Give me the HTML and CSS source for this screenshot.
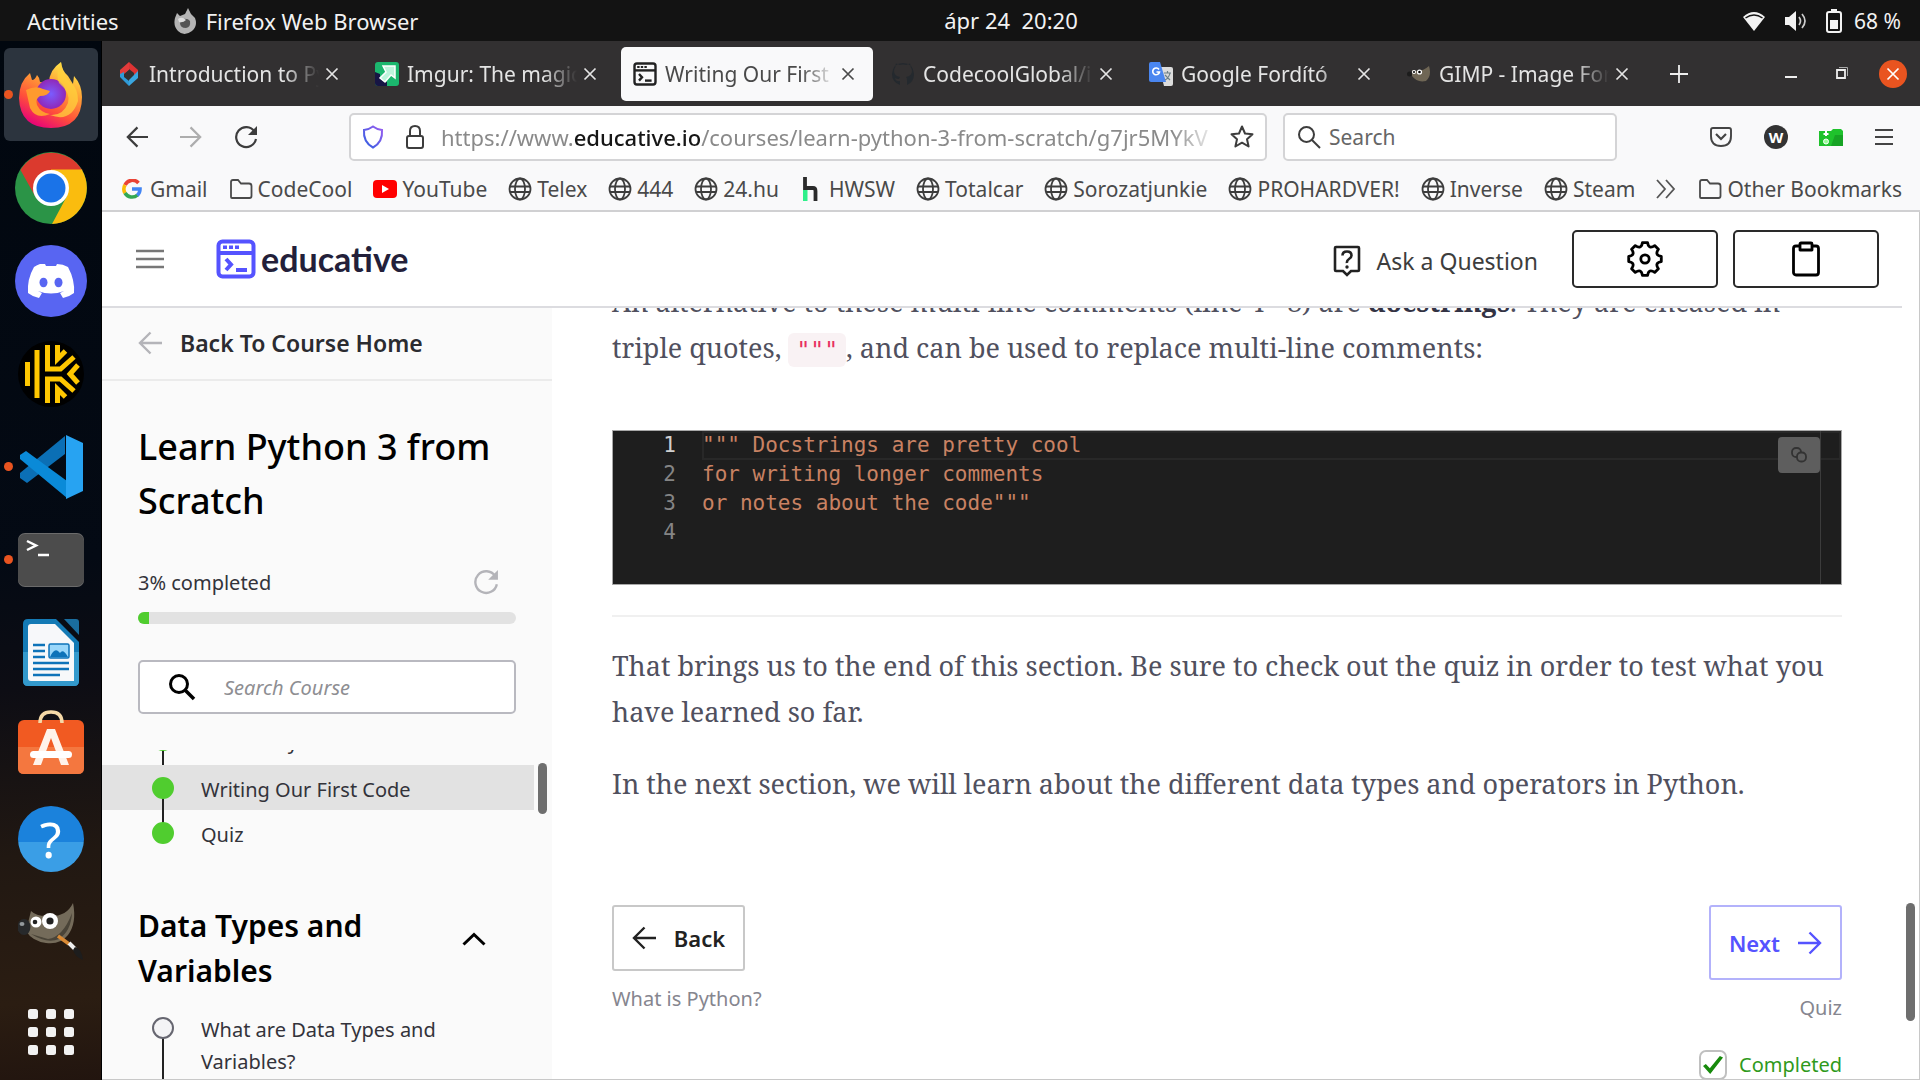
FILE: index.html
```html
<!DOCTYPE html>
<html lang="en">
<head>
<meta charset="utf-8">
<title>Writing Our First Code - Learn Python 3 from Scratch</title>
<link rel="stylesheet" href="styles.css">
</head>
<body>
<svg class="sprite" aria-hidden="true">
  <symbol id="globe" viewBox="0 0 24 24"><g fill="none" stroke="#3d3d3d" stroke-width="1.8"><circle cx="12" cy="12" r="10.5"/><ellipse cx="12" cy="12" rx="5" ry="10.5"/><path d="M2 9.5h20M2 15h20"/></g></symbol>
  <symbol id="folder" viewBox="0 0 24 24"><path d="M2 20V5q0-2 2-2h5l3 3.500h8q2.500 0 2.500 2.500V19q0 2-2 2H3q-1 0-1-1z" fill="none" stroke="#4a4a4a" stroke-width="1.800"/></symbol>
  <symbol id="close" viewBox="0 0 14 14"><path d="M1.500 1.500l11 11M12.500 1.500l-11 11" fill="none" stroke="currentColor" stroke-width="1.700"/></symbol>
  <symbol id="arrow-left" viewBox="0 0 24 24"><path d="M12.500 1.500L2 12l10.500 10.500M2 12h22" fill="none" stroke="currentColor" stroke-width="2.400"/></symbol>
  <symbol id="arrow-right" viewBox="0 0 24 24"><path d="M11.500 1.500L22 12 11.500 22.500M22 12H0" fill="none" stroke="currentColor" stroke-width="2.400"/></symbol>
  <symbol id="reload" viewBox="0 0 24 24"><path d="M20.500 6.500A10 10 0 1 0 22 14" fill="none" stroke="currentColor" stroke-width="2.200"/><path d="M23 1v9h-9z" fill="currentColor"/></symbol>
  <symbol id="search" viewBox="0 0 24 24"><circle cx="9.500" cy="9.500" r="7.500" fill="none" stroke="currentColor" stroke-width="2"/><path d="M15 15l8 8" stroke="currentColor" stroke-width="2"/></symbol>
  <symbol id="terminal-window" viewBox="0 0 40 40"><g fill="none" stroke="currentColor" stroke-width="4"><rect x="2.500" y="2.500" width="35" height="35" rx="4"/><path d="M2 14h36"/><path d="M10 20l5 5.500-5 5.500"/><path d="M20 31h11"/></g><path d="M7 6.500h4v3.500H7zM13 6.500h4v3.500h-4zM19 6.500h4v3.500h-4z" fill="currentColor"/></symbol>
</svg>

<div class="desktop">
  <header class="topbar">
    <div class="topbar-left">
      <button class="plain">Activities</button>
      <button class="plain app-name">
        <svg width="24" height="26" viewBox="0 0 24 26"><path d="M2 10L4 5l3 3 5-2 3-6 3 6 4 4q3 8-3 13-8 6-14 0Q0 18 2 10z" fill="#b4b4b4"/><path d="M9 11q6-1 8 2 1 6-4 7-6 0-6-5z" fill="#555"/><path d="M5 11q4-3 8 1-3 3-7 2z" fill="#ddd"/></svg>
        Firefox Web Browser
      </button>
    </div>
    <time class="clock">ápr 24&nbsp; 20:20</time>
    <div class="status">
      <svg width="24" height="24" viewBox="0 0 24 24"><path d="M12 22L1 8Q12-2 23 8z" fill="#f2f2f2"/><path d="M3.500 9q8.500-6 17 0" stroke="#131313" stroke-width="1.500" fill="none"/></svg>
      <svg width="24" height="24" viewBox="0 0 24 24"><path d="M1 8h4l7-6v20l-7-6H1z" fill="#f2f2f2"/><path d="M15 8q3 4 0 8M18 5q6 7 0 14" stroke="#ccc" stroke-width="1.700" fill="none"/></svg>
      <span class="battery">
        <svg width="16" height="24" viewBox="0 0 16 24"><path d="M5 0h6v3H5z" fill="#f2f2f2"/><rect x="1" y="3" width="14" height="20" rx="2" fill="none" stroke="#f2f2f2" stroke-width="2"/><path d="M4 11h8v9H4z" fill="#f2f2f2"/></svg>
        68 %
      </span>
    </div>
  </header>

  <nav class="dock" aria-label="Dock">
    <button class="dock-item selected running" aria-label="Firefox">
      <svg width="66" height="66" viewBox="0 0 66 66"><defs><linearGradient id="ff" x1=".8" y1="0" x2=".3" y2="1"><stop offset="0" stop-color="#fff44f"/><stop offset=".35" stop-color="#ffa436"/><stop offset=".7" stop-color="#ff4f3a"/><stop offset="1" stop-color="#e6007a"/></linearGradient><radialGradient id="ffp"><stop offset="0" stop-color="#7a5cff"/><stop offset="1" stop-color="#9028b8"/></radialGradient></defs><path d="M1 36Q1 20 12 11l2 7q3 0 5-5 3 3 3 7l9 1q0-13 12-21 1 9 7 14l5 8 1-8q8 9 8 21 0 31-31 31T1 36z" fill="url(#ff)"/><circle cx="33" cy="32" r="15" fill="url(#ffp)"/><path d="M8 28q10-5 17-1l7 2q-2 5-10 5-5 3-3 9 4 8 13 9Q18 58 12 46z" fill="#ff9a2e"/><path d="M43 0q-6 12-2 21 12 10 9 20-5 13-18 12 21 8 28-14 0-13-7-18-9-8-10-21z" fill="#ffd23c" opacity=".75"/></svg>
    </button>
    <button class="dock-item" aria-label="Chrome">
      <svg width="72" height="72" viewBox="0 0 72 72"><circle cx="36" cy="36" r="36" fill="#2b9447"/><path d="M5.500 18A36 36 0 0 1 67 18L36 20 20 44z" fill="#db3a2e"/><path d="M67 18A36 36 0 0 1 37 72L52 44 50 25 36 18z" fill="#fabc0e"/><path d="M36 18h31.200" stroke="#fabc0e"/><circle cx="36" cy="36" r="18" fill="#fff"/><circle cx="36" cy="36" r="14.500" fill="#1a73e8"/></svg>
    </button>
    <button class="dock-item" aria-label="Discord">
      <svg width="72" height="72" viewBox="0 0 72 72"><circle cx="36" cy="36" r="36" fill="#5865f2"/><path d="M25 19l5 0 1 2h10l1-2q6 0 11 3 7 13 6 26-5 4-11 5l-3-5 4-2q-13 5-26 0l4 2-3 5q-6-1-11-5-1-14 6-26 3-2 6-3z" fill="#fff"/><ellipse cx="28.500" cy="37.500" rx="4" ry="4.800" fill="#5865f2"/><ellipse cx="43.500" cy="37.500" rx="4" ry="4.800" fill="#5865f2"/></svg>
    </button>
    <button class="dock-item" aria-label="Keeper">
      <svg width="66" height="66" viewBox="0 0 66 66"><circle cx="33" cy="33" r="33" fill="#000"/><g fill="none" stroke="#ffc700" stroke-width="5"><path d="M9.500 21v24M19 9v48M29.500 4v24h13L56 16M29.500 62V38h13L56 50M39.500 4v14l8-8M39.500 62V48l8 8M60 24l-8 9 8 9"/></g></svg>
    </button>
    <button class="dock-item running" aria-label="Visual Studio Code">
      <svg width="64" height="64" viewBox="0 0 64 64"><path d="M46 1v18L8 48l-7-5v-5z" fill="#0b6fb5"/><path d="M7 16l41 30v17L1 24v-4z" fill="#0a8ad8"/><path d="M47 0l17 8v48l-17 8z" fill="#27a3f2"/></svg>
    </button>
    <button class="dock-item running" aria-label="Terminal">
      <svg width="66" height="54" viewBox="0 0 66 54"><rect width="66" height="54" rx="7" fill="#6b6b6b"/><rect y="1" width="66" height="52" rx="7" fill="#4c4c4c"/><path d="M9 8l9 4.500L9 17M20 22h11" fill="none" stroke="#fff" stroke-width="2.500"/></svg>
    </button>
    <button class="dock-item" aria-label="LibreOffice Writer">
      <svg width="56" height="67" viewBox="0 0 56 67"><path d="M5 0h28l23 23v39q0 5-5 5H5q-5 0-5-5V5q0-5 5-5z" fill="#147ab5"/><path d="M0 33h56v29q0 5-5 5H5q-5 0-5-5z" fill="#3399cc"/><path d="M8 5h24l19 19v38H8q-3 0-3-3V8q0-3 3-3z" fill="#f7f8fa"/><path d="M41 0h12q3 0 3 3v13z" fill="#1a6d9f"/><path d="M10 26h12M10 32h12M10 38h12M10 44h36M10 50h36M10 56h27" stroke="#0e73b9" stroke-width="2.600"/><rect x="26" y="25" width="20" height="14" rx="1.500" fill="#9ad7fa" stroke="#0e73b9" stroke-width="1.500"/><path d="M27 38q4-9 8-6l2 2q3-5 8 4z" fill="#0e73b9"/></svg>
    </button>
    <button class="dock-item" aria-label="Ubuntu Software">
      <svg width="66" height="72" viewBox="0 0 66 72"><rect y="10" width="66" height="54" rx="6" fill="#f15a22"/><path d="M0 37h66v21q0 6-6 6H6q-6 0-6-6z" fill="#f4773f"/><path d="M22 13Q22 2 33 2t11 11" fill="none" stroke="#f5d9a8" stroke-width="3.500"/><path d="M15 55l14-36h8l14 36h-8L33 28l-10 27z" fill="#fff3ea"/><rect x="12" y="41" width="42" height="7" rx="3.500" fill="#fff"/></svg>
    </button>
    <button class="dock-item help" aria-label="Help">?</button>
    <button class="dock-item" aria-label="GIMP">
      <svg width="66" height="58" viewBox="0 0 66 58"><path d="M13 8q5 5 15 5 20 2 27-13 4 20-5 32-8 10-22 8Q14 38 8 28z" fill="#746b5a"/><path d="M30 36q15-2 24-26-1 18-13 26-12 5-28-5z" fill="#4a4438"/><ellipse cx="6" cy="24" rx="6.500" ry="8" fill="#27292b"/><ellipse cx="4" cy="21" rx="2.500" ry="2" fill="#93999d"/><circle cx="18" cy="19" r="5.500" fill="#fff"/><circle cx="32" cy="18" r="8" fill="#fff"/><circle cx="17" cy="19" r="2.300" fill="#222"/><circle cx="32" cy="18" r="3.600" fill="#222"/><path d="M40 33l11 8" stroke="#d98a35" stroke-width="3.500"/><path d="M51 40l6 6" stroke="#eee" stroke-width="4"/><path d="M57 44q7 2 8 13-8-3-10-10z" fill="#1d1d1d"/></svg>
    </button>
    <button class="dock-item apps" aria-label="Show Applications">
      <svg width="46" height="46" viewBox="0 0 46 46" fill="#f2f2f2"><rect width="10" height="10" rx="2.500"/><rect x="18" width="10" height="10" rx="2.500"/><rect x="36" width="10" height="10" rx="2.500"/><rect y="18" width="10" height="10" rx="2.500"/><rect x="18" y="18" width="10" height="10" rx="2.500"/><rect x="36" y="18" width="10" height="10" rx="2.500"/><rect y="36" width="10" height="10" rx="2.500"/><rect x="18" y="36" width="10" height="10" rx="2.500"/><rect x="36" y="36" width="10" height="10" rx="2.500"/></svg>
    </button>
  </nav>

  <main class="browser">
    <div class="tabstrip">
      <div class="tab">
        <svg class="fav" viewBox="0 0 24 24"><path d="M3 14V8l9-8v8l-5 4z" fill="#e23b3b"/><path d="M12 0l9 8v6l-4 3V11l-5-4z" fill="#d33"/><path d="M3 12l4-2v5l5 4v5l-9-9z" fill="#2f9bd8"/><path d="M12 24l9-8V9l-4 4-5 5z" fill="#3aa6e0"/><path d="M12 8l4 4-4 4-4-4z" fill="#323031"/></svg>
        <button class="plain tab-title">Introduction to Python</button>
        <button class="plain tab-close" aria-label="Close tab"><svg width="14" height="14"><use href="#close"/></svg></button>
      </div>
      <div class="tab">
        <svg class="fav" viewBox="0 0 24 24"><rect width="24" height="24" rx="3" fill="#1bb76e"/><path d="M0 10l5 2v4l3 3 4 1v4H3q-3 0-3-3z" fill="#171544"/><path d="M8 4h12v12l-4-3-6 7-5-4 6-6z" fill="#bdf5dc" stroke="#fff" stroke-width="1.500"/></svg>
        <button class="plain tab-title">Imgur: The magic of the Internet</button>
        <button class="plain tab-close" aria-label="Close tab"><svg width="14" height="14"><use href="#close"/></svg></button>
      </div>
      <div class="tab active">
        <svg class="fav"><use href="#terminal-window"/></svg>
        <button class="plain tab-title">Writing Our First Code</button>
        <button class="plain tab-close" aria-label="Close tab"><svg width="14" height="14"><use href="#close"/></svg></button>
      </div>
      <div class="tab">
        <svg class="fav" viewBox="0 0 24 24"><path d="M9 23v-4q-4 1-5-3 2 1 4 1l1-2q-6-1-6-6 0-2 1.500-4-.5-2 .5-3.500 2 0 3.500 1.500 3.500-1 7 0Q17 1.500 19 1.500q1 2 .5 3.500Q21 7 21 9q0 5-6 6 1 1 1 3v5q7-3 7-11Q22 1 12 1T1 12q0 8 8 11z" fill="#24292e"/></svg>
        <button class="plain tab-title">CodecoolGlobal/introduction</button>
        <button class="plain tab-close" aria-label="Close tab"><svg width="14" height="14"><use href="#close"/></svg></button>
      </div>
      <div class="tab">
        <svg class="fav" viewBox="0 0 24 24"><path d="M10 5h12q2 0 2 2v15q0 2-2 2h-7z" fill="#dcdcdc"/><path d="M2 0h9l6 20H2q-2 0-2-2V2q0-2 2-2z" fill="#4a86f0"/><path d="M10 7.500A3.400 3.400 0 1 0 10.500 10H7.500" fill="none" stroke="#fff" stroke-width="1.600"/><path d="M15 11h7M18.500 9v2M21 11q-1 5-5 7M16 13l5 5" stroke="#6b7f86" fill="none" stroke-width="1.200"/></svg>
        <button class="plain tab-title">Google Fordító</button>
        <button class="plain tab-close" aria-label="Close tab"><svg width="14" height="14"><use href="#close"/></svg></button>
      </div>
      <div class="tab">
        <svg class="fav" viewBox="0 0 24 24"><path d="M5 8q9 3 17-4 3 10-3 15-9 2-14-5z" fill="#6f6655"/><circle cx="2.500" cy="12" r="2.500" fill="#1c1c1c"/><circle cx="7" cy="10" r="2" fill="#fff"/><circle cx="12.500" cy="10" r="2.600" fill="#fff"/><circle cx="7" cy="10" r="1" /><circle cx="12.500" cy="10" r="1.300"/></svg>
        <button class="plain tab-title">GIMP - Image Format</button>
        <button class="plain tab-close" aria-label="Close tab"><svg width="14" height="14"><use href="#close"/></svg></button>
      </div>
      <button class="plain new-tab" aria-label="New tab"><svg width="18" height="18" viewBox="0 0 18 18"><path d="M9 0v18M0 9h18" stroke="#eee" stroke-width="1.800"/></svg></button>
      <div class="window-buttons">
        <button class="plain" aria-label="Minimize"><svg width="28" height="28" viewBox="0 0 28 28"><path d="M8 17h12" stroke="#eee" stroke-width="2"/></svg></button>
        <button class="plain" aria-label="Restore"><svg width="28" height="28" viewBox="0 0 28 28"><path d="M9 10h8v8H9z" stroke="#eee" stroke-width="1.800" fill="none"/><path d="M11 7.500h8.500V16" stroke="#aaa" fill="none"/></svg></button>
        <button class="plain win-close" aria-label="Close window"><svg width="14" height="14"><use href="#close"/></svg></button>
      </div>
    </div>

    <div class="toolbar">
      <div class="nav-buttons">
        <button class="plain" aria-label="Back"><svg width="22" height="22"><use href="#arrow-left"/></svg></button>
        <button class="plain faded" aria-label="Forward"><svg width="22" height="22"><use href="#arrow-right"/></svg></button>
        <button class="plain" aria-label="Reload"><svg width="24" height="24"><use href="#reload"/></svg></button>
      </div>
      <div class="field url">
        <svg width="24" height="24" viewBox="0 0 24 24"><defs><linearGradient id="sh" x1="1" y1="0" x2="0" y2="1"><stop offset="0" stop-color="#9a5cf0"/><stop offset="1" stop-color="#2f5fe0"/></linearGradient></defs><path d="M12 1.500q4 3 9 3.500 1 12-9 17.500Q2 17 3 5q5-.5 9-3.500z" fill="none" stroke="url(#sh)" stroke-width="2"/></svg>
        <svg class="lock" width="20" height="26" viewBox="0 0 20 26"><rect x="2" y="12" width="16" height="12" rx="2" fill="none" stroke="#3d3d3d" stroke-width="2"/><path d="M5 12V7q0-5 5-5t5 5v5" fill="none" stroke="#3d3d3d" stroke-width="2"/></svg>
        <div class="url-text" role="textbox" aria-label="Address">https://www.<b>educative.io</b>/courses/learn-python-3-from-scratch/g7jr5MYkV</div>
        <button class="plain" aria-label="Bookmark this page"><svg width="26" height="26" viewBox="0 0 26 26"><path d="M13 2.500l3 7 7.500.7-5.500 5 1.600 7.300L13 18.700l-6.600 3.800L8 15.200l-5.500-5 7.500-.7z" fill="none" stroke="#3d3d3d" stroke-width="2" stroke-linejoin="round"/></svg></button>
      </div>
      <label class="field finder">
        <svg width="24" height="24"><use href="#search"/></svg>
        <input type="text" placeholder="Search" aria-label="Search">
      </label>
      <div class="extensions">
        <button class="plain" aria-label="Pocket"><svg width="24" height="24" viewBox="0 0 24 24"><path d="M4 3h16q2 0 2 2v6q0 10-10 10T2 11V5q0-2 2-2z" fill="none" stroke="#444" stroke-width="1.900"/><path d="M7 9l5 5 5-5" fill="none" stroke="#444" stroke-width="2.200"/></svg></button>
        <button class="plain" aria-label="Wappalyzer"><span class="w-badge">W</span></button>
        <button class="plain" aria-label="Downloads"><svg width="24" height="24" viewBox="0 0 24 24"><path d="M0 6h12l2-2h8l2 2v15H0z" fill="#1fc22c"/><path d="M16 10h8v11H12z" fill="#17a324"/><path d="M7 6v5M4.500 9h5" stroke="#fff" stroke-width="2"/><circle cx="7" cy="16.500" r="2.500" fill="#9f9" stroke="#fff"/></svg></button>
        <button class="plain" aria-label="Menu"><svg width="20" height="18" viewBox="0 0 20 18"><path d="M1 2h18M1 9h18M1 16h18" stroke="#444" stroke-width="1.800"/></svg></button>
      </div>
    </div>

    <nav class="bookmarks" aria-label="Bookmarks">
      <a href="#"><svg width="20" height="20" viewBox="0 0 20 20" fill="none" stroke-width="3.600"><path d="M16.500 4A8.200 8.200 0 0 0 3 6" stroke="#ea4335"/><path d="M3 6a8.200 8.200 0 0 0 0 8.200" stroke="#fbbc05"/><path d="M3 14a8.200 8.200 0 0 0 12.500 2" stroke="#34a853"/><path d="M10 10h8q0 4-2.700 6.300" stroke="#4285f4"/></svg><span class="wide">Gmail</span></a>
      <a href="#"><svg width="24" height="24"><use href="#folder"/></svg>CodeCool</a>
      <a href="#"><svg width="24" height="18" viewBox="0 0 24 18"><rect width="24" height="18" rx="4" fill="#f00"/><path d="M9 5l7 4-7 4z" fill="#fff"/></svg>YouTube</a>
      <a href="#"><svg width="24" height="24"><use href="#globe"/></svg>Telex</a>
      <a href="#"><svg width="24" height="24"><use href="#globe"/></svg>444</a>
      <a href="#"><svg width="24" height="24"><use href="#globe"/></svg>24.hu</a>
      <a href="#"><svg width="24" height="24" viewBox="0 0 24 24"><path d="M5 0v11h8q2.500 0 2.500 3v10" fill="none" stroke="#2b2b2b" stroke-width="3.800"/><path d="M3 13h4.500v11H3z" fill="#2ff08a"/></svg>HWSW</a>
      <a href="#"><svg width="24" height="24"><use href="#globe"/></svg>Totalcar</a>
      <a href="#"><svg width="24" height="24"><use href="#globe"/></svg>Sorozatjunkie</a>
      <a href="#"><svg width="24" height="24"><use href="#globe"/></svg>PROHARDVER!</a>
      <a href="#"><svg width="24" height="24"><use href="#globe"/></svg>Inverse</a>
      <a href="#"><svg width="24" height="24"><use href="#globe"/></svg>Steam</a>
      <button class="plain more" aria-label="More bookmarks"><svg width="20" height="20" viewBox="0 0 20 20"><path d="M1 1l8 9-8 9M10 1l8 9-8 9" fill="none" stroke="#555" stroke-width="1.800"/></svg></button>
      <a class="other" href="#"><svg width="24" height="24"><use href="#folder"/></svg>Other Bookmarks</a>
    </nav>

    <div class="page">
      <header class="site-header">
        <button class="plain burger" aria-label="Menu"><svg width="28" height="20" viewBox="0 0 28 20"><path d="M0 2h28M0 10h28M0 18h28" stroke="#777" stroke-width="2.600"/></svg></button>
        <a class="logo" href="#"><svg width="40" height="40"><use href="#terminal-window"/></svg><span>educative</span></a>
        <a class="ask" href="#">
          <svg width="28" height="32" viewBox="0 0 28 32"><path d="M3 2h22q1 0 1 1v22q0 1-1 1h-7l-4 4-4-4H3q-1 0-1-1V3q0-1 1-1z" fill="none" stroke="#222" stroke-width="2.600"/><path d="M9.500 10.500q0-4 4.500-4t4.500 4q0 2-2.500 3.500T14 18" fill="none" stroke="#222" stroke-width="2.600"/><circle cx="14" cy="22" r="1.700" fill="#222"/></svg>
          Ask a Question
        </a>
        <button class="header-button" aria-label="Settings"><svg width="38" height="38" viewBox="-19 -19 38 38" fill="none" stroke="#000" stroke-width="2.800" stroke-linejoin="round"><path d="M16.300-2.600L16.300 2.600Q9.200 3.800 13.400 9.700L9.700 13.400Q3.800 9.200 2.600 16.300L-2.600 16.300Q-3.800 9.200-9.700 13.400L-13.400 9.700Q-9.200 3.800-16.300 2.600L-16.300-2.600Q-9.200-3.800-13.400-9.700L-9.700-13.400Q-3.800-9.200-2.600-16.300L2.600-16.300Q3.800-9.200 9.700-13.400L13.400-9.700Q9.200-3.800 16.300-2.600Z"/><circle r="4.200"/></svg></button>
        <button class="header-button" aria-label="Notes"><svg width="30" height="36" viewBox="0 0 30 36" fill="none" stroke="#000" stroke-width="2.800" stroke-linejoin="round"><rect x="2.500" y="5" width="25" height="29" rx="2.500"/><path d="M9 3q0-1 1-1h10q1 0 1 1v6H9z" fill="#fff"/></svg></button>
      </header>

      <div class="columns">
        <aside class="sidebar">
          <a class="course-home" href="#"><svg width="24" height="24"><use href="#arrow-left"/></svg><span>Back To Course Home</span></a>
          <div class="course-info">
            <h1>Learn Python 3 from Scratch</h1>
            <div class="progress-row">
              <label for="progress">3% completed</label>
              <button class="plain" aria-label="Reset progress"><svg width="26" height="26"><use href="#reload"/></svg></button>
            </div>
            <progress id="progress" value="3" max="100"></progress>
            <label class="course-search">
              <svg width="28" height="28" viewBox="0 0 28 28"><circle cx="11" cy="11" r="8.500" fill="none" stroke="#000" stroke-width="3"/><path d="M17 17l9 9" stroke="#000" stroke-width="3.600"/></svg>
              <input type="text" placeholder="Search Course" aria-label="Search Course">
            </label>
          </div>
          <div class="lessons">
            <ul class="lesson-list scrolled">
              <li class="done"><a href="#">What is Python?</a></li>
              <li class="done current"><a href="#">Writing Our First Code</a></li>
              <li class="done last"><a href="#">Quiz</a></li>
            </ul>
            <button class="plain section-title"><span>Data Types and Variables</span><svg class="chevron" width="24" height="14" viewBox="0 0 24 14"><path d="M1.500 12.500L12 2.500l10.500 10" fill="none" stroke="#000" stroke-width="3"/></svg></button>
            <ul class="lesson-list">
              <li><a href="#">What are Data Types and Variables?</a></li>
            </ul>
            <div class="list-thumb"></div>
          </div>
        </aside>

        <article class="lesson">
          <div class="article-body">
            <p class="cut">An alternative to these multi-line comments (line 4 - 8) are <strong>docstrings</strong>. They are encased in triple quotes, <code>"""</code>, and can be used to replace multi-line comments:</p>
            <div class="editor">
              <ol>
                <li class="current-line"><span>""" Docstrings are pretty cool</span></li>
                <li><span>for writing longer comments</span></li>
                <li><span>or notes about the code"""</span></li>
                <li><span></span></li>
              </ol>
              <div class="ruler"></div>
              <button class="copy" aria-label="Copy"><svg width="18" height="18" viewBox="0 0 18 18" fill="none" stroke="#333" stroke-width="1.800"><rect x="2" y="2" width="9" height="9" rx="4"/><rect x="7" y="6.500" width="9" height="9" rx="4" fill="#5e5e5e"/></svg></button>
            </div>
            <hr>
            <p>That brings us to the end of this section. Be sure to check out the quiz in order to test what you have learned so far.</p>
            <p>In the next section, we will learn about the different data types and operators in Python.</p>
          </div>
          <footer class="pager">
            <div class="pager-side">
              <button class="pager-button"><svg width="24" height="24"><use href="#arrow-left"/></svg>Back</button>
              <span>What is Python?</span>
            </div>
            <div class="pager-side end">
              <button class="pager-button next">Next<svg width="24" height="24"><use href="#arrow-right"/></svg></button>
              <span>Quiz</span>
              <label class="completed"><input type="checkbox" checked>Completed</label>
            </div>
          </footer>
        </article>
      </div>
      <div class="page-thumb"></div>
    </div>
  </main>
</div>
</body>
</html>
```
FILE: styles.css
```css
*, *::before, *::after { box-sizing: border-box; }

body {
  margin: 0;
  font-family: "Noto Sans", sans-serif;
  font-size: 21px;
  color: #3d3d3d;
}

button, input { font: inherit; color: inherit; }
a { color: inherit; text-decoration: none; }
svg { flex: none; display: block; }
.sprite { position: absolute; width: 0; height: 0; }

.plain {
  background: none;
  border: 0;
  padding: 0;
  display: flex;
  align-items: center;
  justify-content: center;
}

.desktop {
  height: 100vh;
  overflow: hidden;
  display: grid;
  grid-template: 41px minmax(0, 1fr) / 102px minmax(0, 1fr);
}

/* Top bar */
.topbar {
  grid-column: 1 / -1;
  background: #131313;
  color: #f2f2f2;
  display: grid;
  grid-template-columns: 102px 1fr auto 1fr;
  align-items: center;
  padding: 0 19px;
  font-size: 22px;
}
.topbar-left { grid-column: 1 / 3; display: flex; gap: 54px; padding-left: 8px; }
.app-name { gap: 9px; }
.clock { padding-bottom: 2px; }
.status { display: flex; justify-content: flex-end; align-items: center; gap: 18px; font-size: 21px; }
.battery { display: flex; align-items: center; gap: 12px; }

/* Dock */
.dock {
  background: linear-gradient(175deg, #01070f 0%, #040a14 50%, #0d0d14 62%, #211812 78%, #2b1d12 92%, #22150f 100%);
  border-right: 1px solid #000;
  display: flex;
  flex-direction: column;
  align-items: center;
  padding-top: 7px;
}
.dock-item {
  flex: none;
  width: 94px;
  height: 93px;
  padding: 0;
  border: 0;
  border-radius: 6px;
  background: none;
  display: flex;
  align-items: center;
  justify-content: center;
  position: relative;
}
.dock-item.selected { background: #2c343e; }
.dock-item.running::before {
  content: "";
  position: absolute;
  left: 0;
  width: 9px;
  height: 9px;
  border-radius: 50%;
  background: #e95420;
}
.dock-item.help {
  width: 66px;
  height: 66px;
  margin: 14px 0 13px;
  border-radius: 50%;
  background: linear-gradient(#1b82dc 54%, #3a9ee6 54%);
  color: #fff;
  font-size: 50px;
  line-height: 50px;
}
.dock-item.apps { margin-top: 7px; }

/* Browser window */
.browser {
  background: #fff;
  display: flex;
  flex-direction: column;
  min-width: 0;
}
.tabstrip {
  flex: none;
  height: 65px;
  background: #323031;
  color: #e4e4e4;
  display: flex;
  align-items: center;
  gap: 6px;
  padding: 0 13px 0 3px;
}
.tab {
  flex: 0 1 252px;
  height: 54px;
  min-width: 0;
  display: flex;
  align-items: center;
  padding: 0 18px 0 12px;
  border-radius: 5px;
}
.tab.active { background: #f9f9fa; color: #4a4a4a; }
.tab.active .fav { color: #222; }
.fav { width: 24px; height: 24px; }
.tab-title {
  flex: 1;
  min-width: 0;
  margin-left: 8px;
  overflow: hidden;
  white-space: nowrap;
  justify-content: flex-start;
  -webkit-mask-image: linear-gradient(90deg, #000 80%, transparent);
  mask-image: linear-gradient(90deg, #000 80%, transparent);
}
.tab-close { margin-left: 6px; }
.new-tab { margin-left: 17px; }
.window-buttons { margin-left: auto; display: flex; gap: 23px; }
.win-close { width: 28px; height: 28px; border-radius: 50%; background: #e95420; color: #fff; }

.toolbar {
  flex: none;
  height: 62px;
  background: #f9f9fa;
  display: flex;
  align-items: center;
  padding: 0 26px 0 24px;
}
.nav-buttons { display: flex; gap: 32px; margin-right: 91px; }
.faded { opacity: .4; }
.field {
  height: 48px;
  border: 2px solid #d4d4d6;
  border-radius: 5px;
  background: #fff;
  display: flex;
  align-items: center;
}
.url { flex: 1; min-width: 0; padding: 0 10px 0 10px; }
.lock { margin-left: 20px; }
.url-text {
  flex: 1;
  min-width: 0;
  margin: 0 10px 0 16px;
  overflow: hidden;
  white-space: nowrap;
  font-size: 22px;
  color: #8a8a8a;
  -webkit-mask-image: linear-gradient(90deg, #000 94%, transparent);
  mask-image: linear-gradient(90deg, #000 94%, transparent);
}
.url-text b { font-weight: 500; color: #161616; }
.finder { width: 334px; margin-left: 16px; padding: 0 12px; gap: 8px; }
.finder input { flex: 1; min-width: 0; border: 0; padding: 0; background: none; outline: 0; }
.finder input::placeholder { color: #666; opacity: 1; }
.extensions { margin-left: 92px; display: flex; align-items: center; gap: 31px; }
.w-badge {
  width: 24px;
  height: 24px;
  border-radius: 50%;
  background: #333;
  color: #fff;
  font-size: 15px;
  font-weight: 700;
  line-height: 24px;
}

.bookmarks {
  flex: none;
  height: 44px;
  background: #f9f9fa;
  border-bottom: 2px solid #d0d0d2;
  color: #4a4a4a;
  display: flex;
  align-items: center;
  gap: 21px;
  padding: 0 18px 0 20px;
  white-space: nowrap;
}
.bookmarks a { display: flex; align-items: center; gap: 5px; }
.bookmarks .wide { margin-left: 3px; }
.bookmarks .other { margin-left: auto; }

/* Site */
.page {
  flex: 1;
  min-height: 0;
  display: flex;
  flex-direction: column;
  position: relative;
  border-right: 1px solid #c8c8c8;
  border-bottom: 1px solid #c8c8c8;
}
.site-header {
  flex: none;
  height: 96px;
  margin-right: 17px;
  border-bottom: 2px solid #dcdce0;
  display: flex;
  align-items: center;
  padding: 0 23px 0 34px;
}
.logo {
  margin-left: 52px;
  display: flex;
  align-items: center;
  gap: 5px;
  color: #5553ff;
}
.logo span { font-family: Lato, sans-serif; font-weight: 700; font-size: 34px; line-height: 40px; color: #231f3a; }
.ask { margin-left: auto; padding-top: 4px; display: flex; align-items: center; gap: 16px; font-size: 23px; }
.header-button {
  width: 146px;
  height: 58px;
  margin-left: 15px;
  border: 2px solid #2a2a2a;
  border-radius: 5px;
  background: #fff;
  display: flex;
  align-items: center;
  justify-content: center;
}
.ask + .header-button { margin-left: 34px; }

.columns {
  flex: 1;
  min-height: 0;
  display: grid;
  grid-template: minmax(0, 1fr) / 450px minmax(0, 1fr);
}
.sidebar {
  background: #fafafa;
  display: flex;
  flex-direction: column;
  font-size: 20px;
  color: #33333a;
}
.course-home {
  flex: none;
  height: 73px;
  border-bottom: 2px solid #ebebeb;
  display: flex;
  align-items: center;
  gap: 18px;
  padding: 0 0 2px 36px;
  color: #b4b4b9;
  font-size: 23px;
}
.course-home span { color: #2b2b30; font-weight: 600; }
.course-info { flex: none; padding: 39px 36px 0; }
h1 { margin: 0; font-size: 36px; line-height: 54px; font-weight: 500; color: #000; }
.progress-row {
  display: flex;
  align-items: center;
  justify-content: space-between;
  height: 40px;
  margin-top: 34px;
  padding-right: 17px;
}
.progress-row button { color: #b4b4b9; }
progress {
  display: block;
  width: 100%;
  height: 12px;
  margin-top: 10px;
  border: 0;
  border-radius: 6px;
  overflow: hidden;
  -webkit-appearance: none;
  appearance: none;
}
progress::-webkit-progress-bar { background: #e2e2e2; }
progress::-webkit-progress-value { background: #50cd2f; }
.course-search {
  height: 54px;
  margin-top: 36px;
  border: 2px solid #b9b9c0;
  border-radius: 5px;
  background: #fff;
  display: flex;
  align-items: center;
  gap: 28px;
  padding: 0 28px;
}
.course-search input { flex: 1; min-width: 0; border: 0; padding: 0; outline: 0; font-style: italic; background: none; }
.course-search input::placeholder { color: #8e8e92; opacity: 1; }

.lessons {
  flex: 1;
  min-height: 0;
  margin-top: 36px;
  overflow: hidden;
  position: relative;
}
.lesson-list { list-style: none; margin: 0 18px 0 0; padding: 0; }
.lesson-list.scrolled { margin-top: -33px; }
.lesson-list li {
  position: relative;
  min-height: 45px;
  padding: 9px 60px 4px 99px;
  line-height: 32px;
}
.lesson-list li.done:first-child { min-height: 48px; }
.lesson-list li::before {
  content: "";
  position: absolute;
  left: 60px;
  top: 22px;
  height: 100%;
  border-left: 2px solid #222;
}
.lesson-list li.last::before { display: none; }
.lesson-list li::after {
  content: "";
  position: absolute;
  z-index: 1;
  left: 50px;
  top: 12px;
  width: 22px;
  height: 22px;
  border-radius: 50%;
  border: 2px solid #666670;
  background: #f4f4f6;
}
.lesson-list li.done::after { background: #50cd2f; border-color: #50cd2f; }
.lesson-list .current { background: #e2e2e2; }
.section-title {
  margin: 48px 0 12px;
  width: 100%;
  padding: 0 66px 0 36px;
  gap: 80px;
  text-align: left;
  font-size: 30px;
  line-height: 45px;
  font-weight: 600;
  color: #000;
}
.section-title span { flex: 1; }
.chevron { margin-bottom: 18px; }
.list-thumb { position: absolute; right: 5px; top: 13px; width: 9px; height: 51px; border-radius: 5px; background: #6e6e6e; }
.page-thumb { position: absolute; right: 4px; bottom: 58px; width: 9px; height: 118px; border-radius: 5px; background: #6e6e6e; }

/* Lesson */
.lesson {
  padding: 0 77px 0 60px;
  overflow: hidden;
}
.article-body {
  font-family: "Noto Serif", "DejaVu Serif", serif;
  font-size: 27px;
  line-height: 46px;
  color: #50505e;
}
.article-body p { margin: 0 0 26px; }
.article-body .cut { margin: -29px 0 57px; }
.article-body strong { color: #333344; }
.article-body code {
  padding: 4px 8px;
  border-radius: 6px;
  background: #f9f2f4;
  color: #e8305f;
  font-family: "DejaVu Sans Mono", monospace;
  font-size: 23px;
}
.editor {
  position: relative;
  height: 155px;
  border: 1px solid #a8a8a8;
  background: #1e1e1e;
  font-family: "DejaVu Sans Mono", monospace;
  font-size: 21px;
  line-height: 29px;
}
.editor ol { margin: 0; padding: 0; list-style: none; counter-reset: line; }
.editor li {
  counter-increment: line;
  display: grid;
  grid-template-columns: 63px minmax(0, 1fr);
  column-gap: 26px;
  height: 29px;
  color: #c98263;
}
.editor li::before { content: counter(line); text-align: right; color: #858585; }
.editor .current-line::before { color: #d0d0d0; }
.current-line span { box-shadow: inset 0 0 0 2px #282828; }
.ruler { position: absolute; top: 0; bottom: 0; right: 20px; border-left: 1px solid #3c3c3c; }
.copy {
  position: absolute;
  right: 21px;
  top: 6px;
  width: 42px;
  height: 36px;
  padding: 0;
  border: 0;
  border-radius: 4px;
  background: #5e5e5e;
  display: flex;
  align-items: center;
  justify-content: center;
}
hr { margin: 30px 0 26px; border: 0; border-top: 2px solid #f0f0f0; }

.pager { display: flex; justify-content: space-between; margin-top: 98px; font-size: 20px; color: #86868f; }
.pager-side { display: flex; flex-direction: column; align-items: flex-start; gap: 14px; line-height: 28px; }
.pager-side.end { align-items: flex-end; }
.pager-button {
  width: 133px;
  height: 66px;
  padding: 0;
  border: 2px solid #c8c8c8;
  border-radius: 3px;
  background: #fff;
  color: #222;
  font-size: 22px;
  font-weight: 600;
  display: flex;
  align-items: center;
  justify-content: center;
  gap: 18px;
}
.pager-button.next { height: 75px; border-color: #b3b2fb; color: #5553ff; }
.completed { display: flex; align-items: center; gap: 12px; margin-top: 14px; color: #2f9a1c; }
.completed input {
  appearance: none;
  width: 28px;
  height: 30px;
  margin: 0;
  border: 2px solid #c0c0c0;
  border-radius: 7px;
  display: grid;
  place-items: center;
}
.completed input::before {
  content: "";
  width: 20px;
  height: 18px;
  background: #178a0c;
  clip-path: polygon(0 55%, 14% 45%, 34% 68%, 84% 0, 100% 8%, 36% 100%);
}
```
